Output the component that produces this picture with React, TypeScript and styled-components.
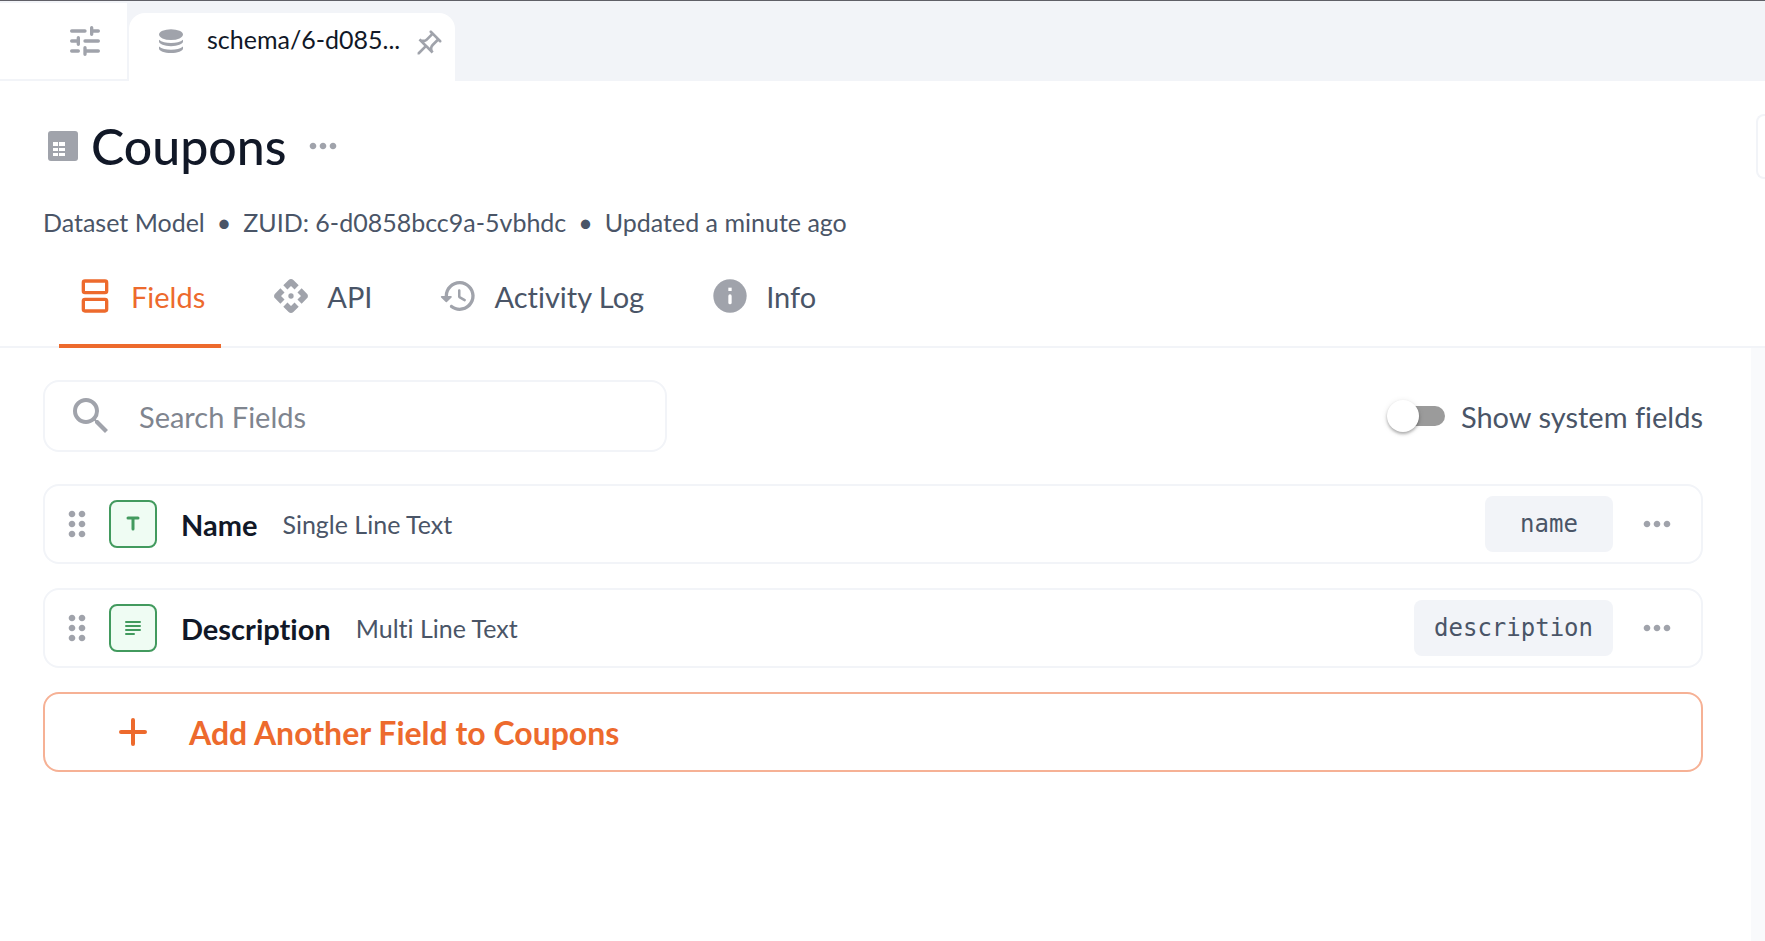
import React, { useState } from 'react';
import styled, { createGlobalStyle } from 'styled-components';
import { MdDragIndicator, MdMoreHoriz, MdOutlinePushPin, MdSearch } from 'react-icons/md';

const color = {
  text: '#111827',
  muted: '#4a5567',
  placeholder: '#7f858f',
  icon: '#a0a3ab',
  line: '#f2f4f8',
  fill: '#f2f4f8',
  page: '#f9fafc',
  orange: '#ed6a2d',
  orangeLine: '#f6b195',
  green: '#429a5e',
  greenFill: '#effcf3',
};

const GlobalStyle = createGlobalStyle`
  *, *::before, *::after { box-sizing: border-box; }
  body {
    margin: 0;
    background: #fff;
    color: ${color.text};
    font-family: Lato, "Open Sans", sans-serif;
    font-variant-ligatures: none;
    overflow-x: hidden;
  }
  button, input { font: inherit; font-variant-ligatures: inherit; color: inherit; }
  button { margin: 0; padding: 0; border: 0; background: none; cursor: pointer; }
  h1, ul, p { margin: 0; padding: 0; }
`;

const Page = styled.div`
  display: flex;
  flex-direction: column;
  min-height: 100vh;
`;

/* Window tab strip */
const TabStrip = styled.nav`
  display: flex;
  gap: 2px;
  height: 81px;
  border-top: 1px solid #606067;
  background: ${color.fill};
`;

const MenuCell = styled.div`
  display: flex;
  align-items: center;
  justify-content: flex-end;
  width: 127px;
  margin: 2px 0;
  padding-right: 22px;
  background: #fff;
`;

const IconButton = styled.button`
  display: flex;
  flex: none;
  color: ${color.icon};
`;

const DocumentTab = styled.div`
  display: flex;
  align-items: flex-start;
  width: 326px;
  margin-top: 12px;
  padding: 16px 12px 0 30px;
  border-radius: 16px 16px 0 0;
  background: #fff;
  color: ${color.icon};
`;

const DocumentLink = styled.a`
  flex: 1;
  margin-left: 24px;
  color: ${color.text};
  font-size: 25px;
  line-height: 20px;
  text-decoration: none;
  white-space: nowrap;
`;

const PinIcon = styled(MdOutlinePushPin)`
  transform: rotate(45deg);
`;

/* Model header */
const Header = styled.header`
  padding-top: 32px;
`;

const TitleRow = styled.div`
  display: flex;
  align-items: center;
  height: 66px;
  padding-left: 43px;
  color: ${color.icon};
`;

const Title = styled.h1`
  margin: 0 16px 0 8px;
  color: ${color.text};
  font-size: 50px;
  font-weight: 500;
  line-height: 64px;
`;

const EdgeButton = styled.button`
  width: 9px;
  height: 65px;
  margin-left: auto;
  border: 2px solid ${color.line};
  border-right: 0;
  border-radius: 8px 0 0 8px;
`;

const Meta = styled.p`
  display: flex;
  gap: 12px;
  margin-top: 27px;
  padding-left: 43px;
  color: ${color.muted};
  font-size: 25px;
  line-height: 32px;
`;

const TabList = styled.div`
  display: flex;
  gap: 34px;
  margin-top: 10px;
  padding-left: 59px;
  box-shadow: inset 0 -2px ${color.line};
`;

const Tab = styled.button<{ $active?: boolean }>`
  display: flex;
  align-items: center;
  gap: 16px;
  height: 100px;
  padding: 0 16px;
  border-bottom: 4px solid ${(p) => (p.$active ? color.orange : 'transparent')};
  color: ${(p) => (p.$active ? color.orange : color.muted)};
  font-size: 29px;

  svg { color: ${(p) => (p.$active ? color.orange : color.icon)}; }
`;

/* Field list */
const Body = styled.div`
  display: flex;
  flex: 1;
  padding-right: 14px;
  background: ${color.page};
`;

const Main = styled.main`
  flex: 1;
  padding: 32px 48px 32px 43px;
  background: #fff;
`;

const Toolbar = styled.div`
  display: flex;
  align-items: center;
  justify-content: space-between;
  margin-bottom: 32px;
`;

const SearchBox = styled.label`
  display: flex;
  align-items: center;
  gap: 24px;
  flex: 0 1 624px;
  height: 72px;
  padding: 0 22px;
  border: 2px solid ${color.line};
  border-radius: 16px;
  color: ${color.icon};
`;

const SearchInput = styled.input`
  flex: 1;
  min-width: 0;
  padding: 0;
  border: 0;
  outline: 0;
  background: none;
  color: ${color.text};
  font-size: 29px;

  &::placeholder { color: ${color.placeholder}; opacity: 1; }
`;

const SwitchLabel = styled.label`
  display: flex;
  align-items: center;
  gap: 16px;
  color: ${color.muted};
  font-size: 29px;
  cursor: pointer;
`;

const Switch = styled.input`
  appearance: none;
  display: flex;
  align-items: center;
  width: 52px;
  height: 20px;
  margin: 0;
  border-radius: 10px;
  background: #9b9b9b;
  cursor: pointer;

  &::before {
    content: '';
    flex: none;
    width: 32px;
    height: 32px;
    margin-left: -6px;
    border-radius: 50%;
    background: #fff;
    box-shadow: 0 2px 3px rgba(0, 0, 0, 0.28), 0 1px 6px rgba(0, 0, 0, 0.1);
  }

  &:checked { background: ${color.orangeLine}; }
  &:checked::before { margin-left: 26px; background: ${color.orange}; }
`;

const FieldList = styled.ul`
  display: flex;
  flex-direction: column;
  gap: 24px;
  list-style: none;
`;

const FieldRow = styled.li`
  display: flex;
  align-items: center;
  height: 80px;
  padding: 0 24px 0 12px;
  border: 2px solid ${color.line};
  border-radius: 16px;
  color: ${color.icon};
`;

const TypeBadge = styled.span`
  display: flex;
  align-items: center;
  justify-content: center;
  width: 48px;
  height: 48px;
  margin: 0 24px 0 12px;
  border: 2px solid ${color.green};
  border-radius: 8px;
  background: ${color.greenFill};
  color: ${color.green};
`;

const FieldName = styled.strong`
  margin-right: 25px;
  color: ${color.text};
  font-size: 29px;
  font-weight: 700;
`;

const FieldType = styled.span`
  color: ${color.muted};
  font-size: 25px;
`;

const ApiName = styled.button`
  min-width: 128px;
  height: 56px;
  margin: 0 24px 0 auto;
  padding: 0 20px;
  border-radius: 8px;
  background: ${color.fill};
  color: ${color.muted};
  font-family: "DejaVu Sans Mono", monospace;
  font-size: 24px;
`;

const AddButton = styled.button`
  display: flex;
  align-items: center;
  gap: 32px;
  width: 100%;
  height: 80px;
  padding: 0 64px;
  border: 2px solid ${color.orangeLine};
  border-radius: 16px;
  color: ${color.orange};
  font-size: 32px;
  font-weight: 700;
`;

const TuneIcon = () => (
  <svg width="40" height="40" viewBox="0 0 24 24" fill="none" stroke="currentColor" strokeWidth="2" strokeLinecap="round">
    <path d="M4 6h8M16 4v4M16 6h4M4 12h4M8 10v4M12 12h8M4 18h4M12 16v4M12 18h8" />
  </svg>
);

const DatabaseIcon = () => (
  <svg width="24" height="24" viewBox="0 0 24 24" fill="currentColor">
    <ellipse cx="12" cy="5.6" rx="12" ry="5.4" />
    <path d="M0 10.8C2.6 12.9 7 14 12 14s9.4-1.1 12-3.2v1.8c0 2.6-5.4 4.6-12 4.6S0 15.2 0 12.6z" />
    <path d="M0 17.6C2.6 19.7 7 20.8 12 20.8s9.4-1.1 12-3.2v1.8c0 2.6-5.4 4.6-12 4.6S0 22 0 19.4z" />
  </svg>
);

const DatasetIcon = () => (
  <svg width="40" height="40" viewBox="0 0 40 40">
    <rect x="5" y="5" width="30" height="30" rx="3" fill="currentColor" />
    <path d="M10 16h5v4h-5zM16 16h6v4h-6zM10 22h5v3h-5zM16 22h6v3h-6zM10 27h5v3h-5zM16 27h6v3h-6z" fill="#fff" />
  </svg>
);

const FieldsIcon = () => (
  <svg width="40" height="40" viewBox="0 0 24 24" fill="none" stroke="currentColor" strokeWidth="2">
    <rect x="5" y="3" width="14" height="7" rx="1" />
    <rect x="5" y="14" width="14" height="7" rx="1" />
  </svg>
);

const chevron = 'M12 6l2.12 2.12 2.5-2.5-3.2-3.2c-.78-.78-2.06-.78-2.84 0l-3.2 3.2 2.5 2.5z';

const ApiIcon = () => (
  <svg width="40" height="40" viewBox="0 0 24 24" fill="currentColor">
    {[0, 90, 180, 270].map((turn) => (
      <path key={turn} d={chevron} transform={`rotate(${turn} 12 12)`} />
    ))}
    <circle cx="12" cy="12" r="1.6" />
  </svg>
);

const HistoryIcon = () => (
  <svg width="40" height="40" viewBox="0 0 24 24" fill="currentColor">
    <path d="M13.26 3C8.17 2.86 4 6.95 4 12H2.21c-.45 0-.67.54-.35.85l2.79 2.8c.2.2.51.2.71 0l2.79-2.8c.31-.31.09-.85-.36-.85H6c0-3.9 3.18-7.05 7.1-7 3.72.05 6.85 3.18 6.9 6.9.05 3.91-3.1 7.1-7 7.1-1.61 0-3.1-.55-4.28-1.48-.4-.31-.96-.28-1.32.08-.42.42-.39 1.13.08 1.49C9 20.29 10.91 21 13 21c5.05 0 9.14-4.17 9-9.26-.13-4.69-4.05-8.61-8.74-8.74zm-.51 5c-.41 0-.75.34-.75.75v3.68c0 .35.19.68.49.86l3.12 1.85c.36.21.82.09 1.03-.26.21-.36.09-.82-.26-1.03l-2.88-1.71v-3.4c0-.4-.34-.74-.75-.74z" />
  </svg>
);

const InfoIcon = () => (
  <svg width="40" height="40" viewBox="0 0 24 24">
    <circle cx="12" cy="12" r="10" fill="currentColor" />
    <path d="M12 12v4" stroke="#fff" strokeWidth="2" strokeLinecap="round" />
    <path d="M11 7h2v2h-2z" fill="#fff" />
  </svg>
);

const TextIcon = () => (
  <svg width="24" height="24" viewBox="0 0 24 24" fill="none" stroke="currentColor" strokeWidth="3" strokeLinecap="round">
    <path d="M7 6h10M12 6v11" />
  </svg>
);

const ParagraphIcon = () => (
  <svg width="24" height="24" viewBox="0 0 24 24" fill="none" stroke="currentColor" strokeWidth="2" strokeLinecap="round">
    <path d="M5 6h14M5 10h14M5 14h14M5 18h8" />
  </svg>
);

const PlusIcon = () => (
  <svg width="48" height="48" viewBox="0 0 24 24" fill="none" stroke="currentColor" strokeWidth="2" strokeLinecap="round">
    <path d="M12 6v12M6 12h12" />
  </svg>
);

const tabs = [
  { label: 'Fields', Icon: FieldsIcon },
  { label: 'API', Icon: ApiIcon },
  { label: 'Activity Log', Icon: HistoryIcon },
  { label: 'Info', Icon: InfoIcon },
];

const fields = [
  { label: 'Name', type: 'Single Line Text', apiName: 'name', Icon: TextIcon },
  { label: 'Description', type: 'Multi Line Text', apiName: 'description', Icon: ParagraphIcon },
];

export default function App() {
  const [active, setActive] = useState('Fields');

  return (
    <Page>
      <GlobalStyle />
      <TabStrip aria-label="Open documents">
        <MenuCell>
          <IconButton aria-label="Tab settings"><TuneIcon /></IconButton>
        </MenuCell>
        <DocumentTab>
          <DatabaseIcon />
          <DocumentLink href="#schema">schema/6-d085...</DocumentLink>
          <IconButton aria-label="Pin tab"><PinIcon size={32} /></IconButton>
        </DocumentTab>
      </TabStrip>

      <Header>
        <TitleRow>
          <DatasetIcon />
          <Title>Coupons</Title>
          <IconButton aria-label="Model options"><MdMoreHoriz size={40} /></IconButton>
          <EdgeButton aria-label="Model actions" />
        </TitleRow>
        <Meta>
          <span>Dataset Model</span>
          <span>•</span>
          <span>ZUID: 6-d0858bcc9a-5vbhdc</span>
          <span>•</span>
          <span>Updated a minute ago</span>
        </Meta>
        <TabList role="tablist">
          {tabs.map(({ label, Icon }) => (
            <Tab
              key={label}
              role="tab"
              aria-selected={active === label}
              $active={active === label}
              onClick={() => setActive(label)}
            >
              <Icon />
              {label}
            </Tab>
          ))}
        </TabList>
      </Header>

      <Body>
        <Main>
          <Toolbar>
            <SearchBox>
              <MdSearch size={48} />
              <SearchInput type="text" placeholder="Search Fields" aria-label="Search Fields" />
            </SearchBox>
            <SwitchLabel>
              <Switch type="checkbox" role="switch" />
              Show system fields
            </SwitchLabel>
          </Toolbar>
          <FieldList>
            {fields.map(({ label, type, apiName, Icon }) => (
              <FieldRow key={label}>
                <IconButton aria-label={`Reorder ${label}`}><MdDragIndicator size={40} /></IconButton>
                <TypeBadge><Icon /></TypeBadge>
                <FieldName>{label}</FieldName>
                <FieldType>{type}</FieldType>
                <ApiName>{apiName}</ApiName>
                <IconButton aria-label={`${label} options`}><MdMoreHoriz size={40} /></IconButton>
              </FieldRow>
            ))}
            <li>
              <AddButton>
                <PlusIcon />
                Add Another Field to Coupons
              </AddButton>
            </li>
          </FieldList>
        </Main>
      </Body>
    </Page>
  );
}
